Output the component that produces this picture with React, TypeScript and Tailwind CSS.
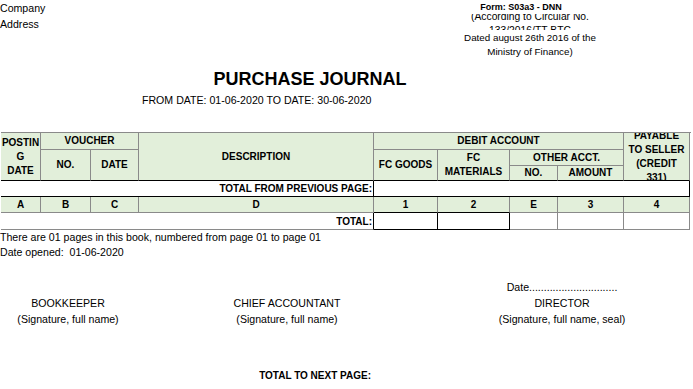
import React from "react";

const G = "bg-[#e2efda]";

export default function App() {
  const hd =
    "flex items-center justify-center text-center font-bold text-[10px] leading-[14px] border-r overflow-hidden " +
    G;
  return (
    <div className="w-[693px] h-[389px] bg-white text-black overflow-hidden font-['Liberation_Sans',Arial,sans-serif] text-[10.6px]">
      {/* top block */}
      <div className="flex">
        <div className="w-[440px] leading-[16px]">
          <div>Company</div>
          <div>Address</div>
        </div>
        <div className="w-[180px]">
          <div className="pr-[18px] text-center font-bold text-[9px] leading-[14px]">Form: S03a3 - DNN</div>
          <div className="h-[16px] overflow-hidden text-center leading-[14px] text-[10.3px]">
            <div className="-mt-[4.5px]">
              <div>(According to Circular No.</div>
              <div>133/2016/TT-BTC</div>
            </div>
          </div>
          <div className="text-center leading-[14px] text-[9.8px] pt-px">
            <div>Dated august 26th 2016 of the</div>
            <div>Ministry of Finance)</div>
          </div>
        </div>
      </div>

      <h1 className="w-[620px] mt-[9px] text-center font-bold text-[18px] leading-[22px]">PURCHASE JOURNAL</h1>
      <div className="mt-[3px] pl-[142px] leading-[14px]">FROM DATE: 01-06-2020 TO DATE: 30-06-2020</div>

      {/* journal table */}
      <div className="mt-[25px] ml-px w-[690px] border-t border-t-[#8a8a8a] grid grid-cols-[40px_50px_48px_235px_64px_72px_48px_66px_66px] grid-rows-[17px_16px_15px_16px_16px_17px]">
        <div className={`${hd} col-start-1 row-start-1 row-span-3 border-b border-r-[#8a8a8a] border-b-black`}>
          <div>POSTIN<br />G<br />DATE</div>
        </div>
        <div className={`${hd} col-start-2 row-start-1 col-span-2 border-b border-r-[#8a8a8a] border-b-[#8a8a8a]`}>VOUCHER</div>
        <div className={`${hd} col-start-2 row-start-2 row-span-2 border-b border-r-[#8a8a8a] border-b-black`}>NO.</div>
        <div className={`${hd} col-start-3 row-start-2 row-span-2 border-b border-r-[#8a8a8a] border-b-black`}>DATE</div>
        <div className={`${hd} col-start-4 row-start-1 row-span-3 border-b border-r-[#8a8a8a] border-b-black`}>DESCRIPTION</div>
        <div className={`${hd} col-start-5 row-start-1 col-span-4 border-b border-r-[#8a8a8a] border-b-[#8a8a8a]`}>DEBIT ACCOUNT</div>
        <div className={`${hd} col-start-5 row-start-2 row-span-2 border-b border-r-[#8a8a8a] border-b-black`}>FC GOODS</div>
        <div className={`${hd} col-start-6 row-start-2 row-span-2 border-b border-r-[#8a8a8a] border-b-black`}>
          <div>FC<br />MATERIALS</div>
        </div>
        <div className={`${hd} col-start-7 row-start-2 col-span-2 border-b border-r-[#8a8a8a] border-b-[#8a8a8a]`}>OTHER ACCT.</div>
        <div className={`${hd} col-start-7 row-start-3 border-b border-r-[#8a8a8a] border-b-black`}>NO.</div>
        <div className={`${hd} col-start-8 row-start-3 border-b border-r-[#8a8a8a] border-b-black`}>AMOUNT</div>
        <div className={`${hd} col-start-9 row-start-1 row-span-3 border-b border-r-[#8a8a8a] border-b-black`}>
          <div className="shrink-0">PAYABLE<br />TO SELLER<br />(CREDIT<br />331)</div>
        </div>

        {/* total from previous page */}
        <div className="col-start-1 row-start-4 col-span-4 flex items-center justify-end pr-px font-bold text-[10px] border-r border-b border-r-black border-b-black">
          TOTAL FROM PREVIOUS PAGE:
        </div>
        <div className="col-start-5 row-start-4 col-span-5 border-r border-b border-r-black border-b-black" />

        {/* letter row */}
        {["A", "B", "C", "D", "1", "2", "E", "3", "4"].map((t, i) => (
          <div
            key={t}
            className={`${hd} row-start-5 border-b border-r-[#8a8a8a] ${i === 4 || i === 5 ? "border-b-black" : "border-b-[#8a8a8a]"}`}
          >
            {t}
          </div>
        ))}

        {/* total row */}
        <div className="col-start-1 row-start-6 col-span-4 flex items-center justify-end pr-px font-bold text-[10px] border-r border-b border-r-black border-b-[#8a8a8a]">
          TOTAL:
        </div>
        <div className="row-start-6 border-r border-b border-r-black border-b-black" />
        <div className="row-start-6 border-r border-b border-r-black border-b-black" />
        <div className="row-start-6 border-r border-b border-r-[#8a8a8a] border-b-[#8a8a8a]" />
        <div className="row-start-6 border-r border-b border-r-[#8a8a8a] border-b-[#8a8a8a]" />
        <div className="row-start-6 border-r border-b border-r-[#8a8a8a] border-b-[#8a8a8a]" />
      </div>

      {/* footer */}
      <div className="leading-[15px]">
        <div>There are 01 pages in this book, numbered from page 01 to page 01</div>
        <div className="whitespace-pre">Date opened:  01-06-2020</div>
      </div>

      <div className="mt-[19px] flex leading-[16px] text-center">
        <div className="w-[136px]">
          <div>&nbsp;</div>
          <div>BOOKKEEPER</div>
          <div>(Signature, full name)</div>
        </div>
        <div className="w-[302px]">
          <div>&nbsp;</div>
          <div>CHIEF ACCOUNTANT</div>
          <div>(Signature, full name)</div>
        </div>
        <div className="w-[248px]">
          <div>Date..............................</div>
          <div>DIRECTOR</div>
          <div>(Signature, full name, seal)</div>
        </div>
      </div>

      <div className="mt-[41px] w-[373px] pr-[2px] text-right font-bold text-[10px] leading-[15px]">TOTAL TO NEXT PAGE:</div>
    </div>
  );
}
